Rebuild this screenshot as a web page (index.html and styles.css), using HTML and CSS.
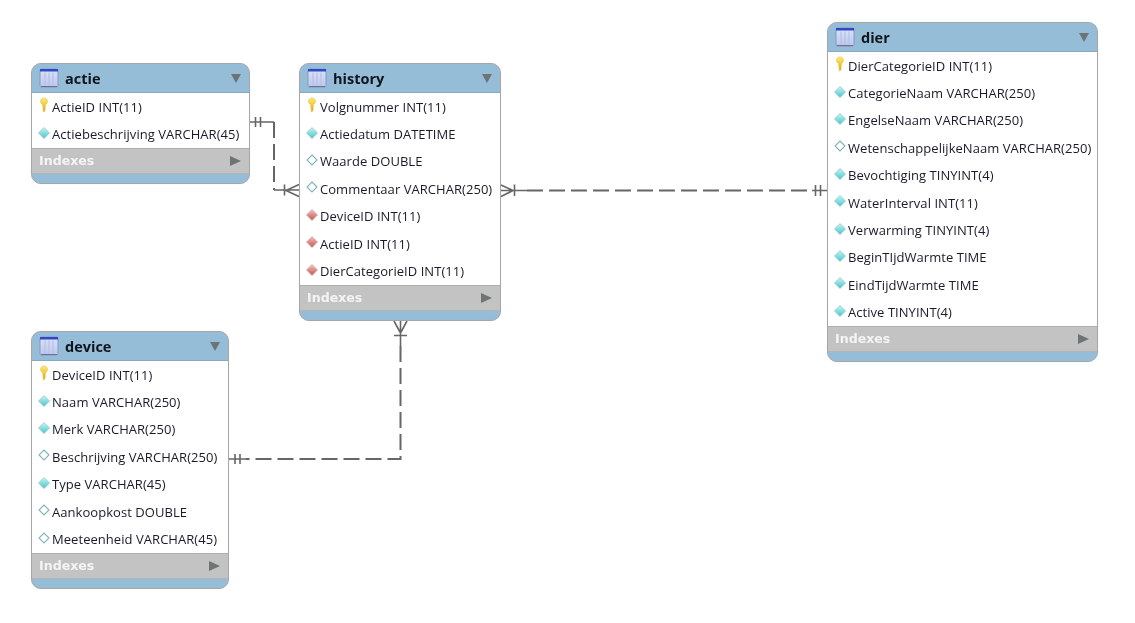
FILE: index.html
```html
<!DOCTYPE html>
<html lang="nl">
<head>
<meta charset="utf-8">
<title>EER diagram</title>
<link rel="stylesheet" href="styles.css">
</head>
<body>
<svg class="defs" width="0" height="0" aria-hidden="true">
  <defs>
    <linearGradient id="gTeal" x1="0" y1="0" x2="0" y2="1"><stop offset="0" stop-color="#c4f6f6"/><stop offset="1" stop-color="#45c6cc"/></linearGradient>
    <linearGradient id="gRed" x1="0" y1="0" x2="0" y2="1"><stop offset="0" stop-color="#f0c4c0"/><stop offset="1" stop-color="#c4544f"/></linearGradient>
    <linearGradient id="gKey" x1="0" y1="0" x2="0" y2="1"><stop offset="0" stop-color="#ffec70"/><stop offset="1" stop-color="#e0aa08"/></linearGradient>
    <linearGradient id="gTbl" x1="0" y1="0" x2="0" y2="1"><stop offset="0" stop-color="#dce3f8"/><stop offset="1" stop-color="#bcc8ea"/></linearGradient>
    <symbol id="i-table" viewBox="0 0 20 20">
      <rect x="1" y="1" width="18" height="18" rx="1.500" fill="url(#gTbl)" stroke="#8a96c4"/>
      <rect x="1" y="1" width="18" height="2.500" fill="#3048c4"/>
      <path d="M6 4.500v13M10 4.500v13M14 4.500v13" stroke="#b0bce6" fill="none"/>
      <path d="M2 18.500h16" stroke="#70708e"/>
    </symbol>
    <symbol id="i-key" viewBox="0 0 12 16">
      <path d="M6 1C3.800 1 2.600 2.600 2.600 4.400 2.600 5.800 3.400 6.800 4.600 7.400L5.400 15 7 13.800 7.400 7.400C8.600 6.800 9.400 5.800 9.400 4.400 9.400 2.600 8.200 1 6 1Z" fill="url(#gKey)" stroke="#e0bc40" stroke-width=".6"/>
    </symbol>
    <symbol id="i-pk" viewBox="0 0 12 12"><path d="M6 .5 11.500 6 6 11.500 .5 6Z" fill="url(#gTeal)" stroke="#a0c4ca" stroke-width=".8"/></symbol>
    <symbol id="i-nn" viewBox="0 0 12 12"><path d="M6 1 11 6 6 11 1 6Z" fill="#fff" stroke="#84b4ba" stroke-width="1.100"/></symbol>
    <symbol id="i-fk" viewBox="0 0 12 12"><path d="M6 .5 11.500 6 6 11.500 .5 6Z" fill="url(#gRed)" stroke="#d4a8a6" stroke-width=".8"/></symbol>
  </defs>
</svg>

<main class="canvas">
  <svg class="links" width="1135" height="623" viewBox="0 0 1135 623" aria-hidden="true">
    <g class="solid">
      <path d="M250 122H274M255.500 117V127M260.500 117V127"/>
      <path d="M274 190H299M284.500 184.500V195.500M299 184.500 286 190.500 299 196.500"/>
      <path d="M501 185 513 190.500 501 196.500M514.500 184.500V196M501 190.500H527"/>
      <path d="M827 190.500H812M820.500 185V196M815.500 185V196"/>
      <path d="M394 321 400.500 333 407 321M400.500 321V346M394 335.500H407"/>
      <path d="M229 459H246M235 454V464M240 454V464"/>
    </g>
    <g class="dash">
      <path d="M274 122V190"/>
      <path d="M527 190.500H812"/>
      <path d="M400.500 346V459H246"/>
    </g>
  </svg>

  <section class="tbl tbl-actie">
    <header class="head"><svg class="ti"><use href="#i-table"/></svg><h2>actie</h2><span class="down"></span></header>
    <ul class="rows">
      <li><svg class="key"><use href="#i-key"/></svg>ActieID INT(11)</li>
      <li><svg class="dot"><use href="#i-pk"/></svg>Actiebeschrijving VARCHAR(45)</li>
    </ul>
    <div class="idx"><span>Indexes</span><span class="right"></span></div>
    <div class="foot"></div>
  </section>

  <section class="tbl tbl-history">
    <header class="head"><svg class="ti"><use href="#i-table"/></svg><h2>history</h2><span class="down"></span></header>
    <ul class="rows">
      <li><svg class="key"><use href="#i-key"/></svg>Volgnummer INT(11)</li>
      <li><svg class="dot"><use href="#i-pk"/></svg>Actiedatum DATETIME</li>
      <li><svg class="dot"><use href="#i-nn"/></svg>Waarde DOUBLE</li>
      <li><svg class="dot"><use href="#i-nn"/></svg>Commentaar VARCHAR(250)</li>
      <li><svg class="dot"><use href="#i-fk"/></svg>DeviceID INT(11)</li>
      <li><svg class="dot"><use href="#i-fk"/></svg>ActieID INT(11)</li>
      <li><svg class="dot"><use href="#i-fk"/></svg>DierCategorieID INT(11)</li>
    </ul>
    <div class="idx"><span>Indexes</span><span class="right"></span></div>
    <div class="foot"></div>
  </section>

  <section class="tbl tbl-device">
    <header class="head"><svg class="ti"><use href="#i-table"/></svg><h2>device</h2><span class="down"></span></header>
    <ul class="rows">
      <li><svg class="key"><use href="#i-key"/></svg>DeviceID INT(11)</li>
      <li><svg class="dot"><use href="#i-pk"/></svg>Naam VARCHAR(250)</li>
      <li><svg class="dot"><use href="#i-pk"/></svg>Merk VARCHAR(250)</li>
      <li><svg class="dot"><use href="#i-nn"/></svg>Beschrijving VARCHAR(250)</li>
      <li><svg class="dot"><use href="#i-pk"/></svg>Type VARCHAR(45)</li>
      <li><svg class="dot"><use href="#i-nn"/></svg>Aankoopkost DOUBLE</li>
      <li><svg class="dot"><use href="#i-nn"/></svg>Meeteenheid VARCHAR(45)</li>
    </ul>
    <div class="idx"><span>Indexes</span><span class="right"></span></div>
    <div class="foot"></div>
  </section>

  <section class="tbl tbl-dier">
    <header class="head"><svg class="ti"><use href="#i-table"/></svg><h2>dier</h2><span class="down"></span></header>
    <ul class="rows">
      <li><svg class="key"><use href="#i-key"/></svg>DierCategorieID INT(11)</li>
      <li><svg class="dot"><use href="#i-pk"/></svg>CategorieNaam VARCHAR(250)</li>
      <li><svg class="dot"><use href="#i-pk"/></svg>EngelseNaam VARCHAR(250)</li>
      <li><svg class="dot"><use href="#i-nn"/></svg>WetenschappelijkeNaam VARCHAR(250)</li>
      <li><svg class="dot"><use href="#i-pk"/></svg>Bevochtiging TINYINT(4)</li>
      <li><svg class="dot"><use href="#i-pk"/></svg>WaterInterval INT(11)</li>
      <li><svg class="dot"><use href="#i-pk"/></svg>Verwarming TINYINT(4)</li>
      <li><svg class="dot"><use href="#i-pk"/></svg>BeginTIjdWarmte TIME</li>
      <li><svg class="dot"><use href="#i-pk"/></svg>EindTijdWarmte TIME</li>
      <li><svg class="dot"><use href="#i-pk"/></svg>Active TINYINT(4)</li>
    </ul>
    <div class="idx"><span>Indexes</span><span class="right"></span></div>
    <div class="foot"></div>
  </section>
</main>
</body>
</html>
```

FILE: styles.css
```css
* { box-sizing: border-box; }
html, body { margin: 0; padding: 0; background: #fff; }
.defs { position: absolute; }
.canvas {
  position: relative;
  width: 1135px;
  height: 623px;
  overflow: hidden;
  font-family: "Open Sans", "Noto Sans", sans-serif;
  color: #1a1a2a;
  filter: blur(.3px);
}
.links { position: absolute; left: 0; top: 0; }
.links g { fill: none; stroke: #666; stroke-width: 2; }
.links .solid { stroke-width: 1.6; }
.links .dash { stroke-dasharray: 16 6; }

.tbl {
  position: absolute;
  display: flex;
  flex-direction: column;
  border: 1px solid #a6a6a6;
  border-radius: 10px;
  overflow: hidden;
  background: #95bdd8;
  box-shadow: 0 0 1px rgba(0,0,0,.15);
}
.tbl-actie { left: 31px; top: 63px; width: 219px; }
.tbl-history { left: 299px; top: 63px; width: 202px; }
.tbl-device { left: 31px; top: 331px; width: 198px; }
.tbl-dier { left: 827px; top: 22px; width: 271px; }

.head {
  height: 29px;
  display: flex;
  align-items: center;
  padding: 0 8px 0 7px;
  gap: 6px;
  background: #95bdd8;
  border-bottom: 1px solid #8aa8bc;
}
.ti { width: 20px; height: 20px; flex: none; }
.head h2 {
  margin: 0;
  padding-top: 2px;
  flex: 1;
  font-size: 14.5px;
  font-weight: 700;
  line-height: 1;
  color: #10151c;
}
.down {
  width: 0; height: 0;
  border-left: 5.5px solid transparent;
  border-right: 5.5px solid transparent;
  border-top: 9px solid #6e7476;
}
.rows {
  list-style: none;
  margin: 0;
  padding: 0;
  background: #fff;
}
.rows li {
  height: 27.4px;
  display: flex;
  align-items: center;
  padding-left: 6px;
  font-size: 13px;
  letter-spacing: .05px;
  white-space: nowrap;
}
.dot { width: 12px; height: 12px; flex: none; margin: -3px 2px 0 0; }
.key { width: 12px; height: 16px; flex: none; margin: -4px 2px 0 0; }
.idx {
  height: 26px;
  display: flex;
  align-items: center;
  justify-content: space-between;
  padding: 0 8px 0 7px;
  background: #c3c3c3;
  border-top: 1px solid #aeaeae;
  border-bottom: 1px solid #b4b4b4;
  font-size: 12.6px;
  font-weight: 700;
  font-family: "DejaVu Sans", sans-serif;
  color: #f4f4f4;
}
.right {
  width: 0; height: 0;
  border-top: 5px solid transparent;
  border-bottom: 5px solid transparent;
  border-left: 11px solid #6e7476;
}
.foot { height: 9px; background: #95bdd8; }
```
